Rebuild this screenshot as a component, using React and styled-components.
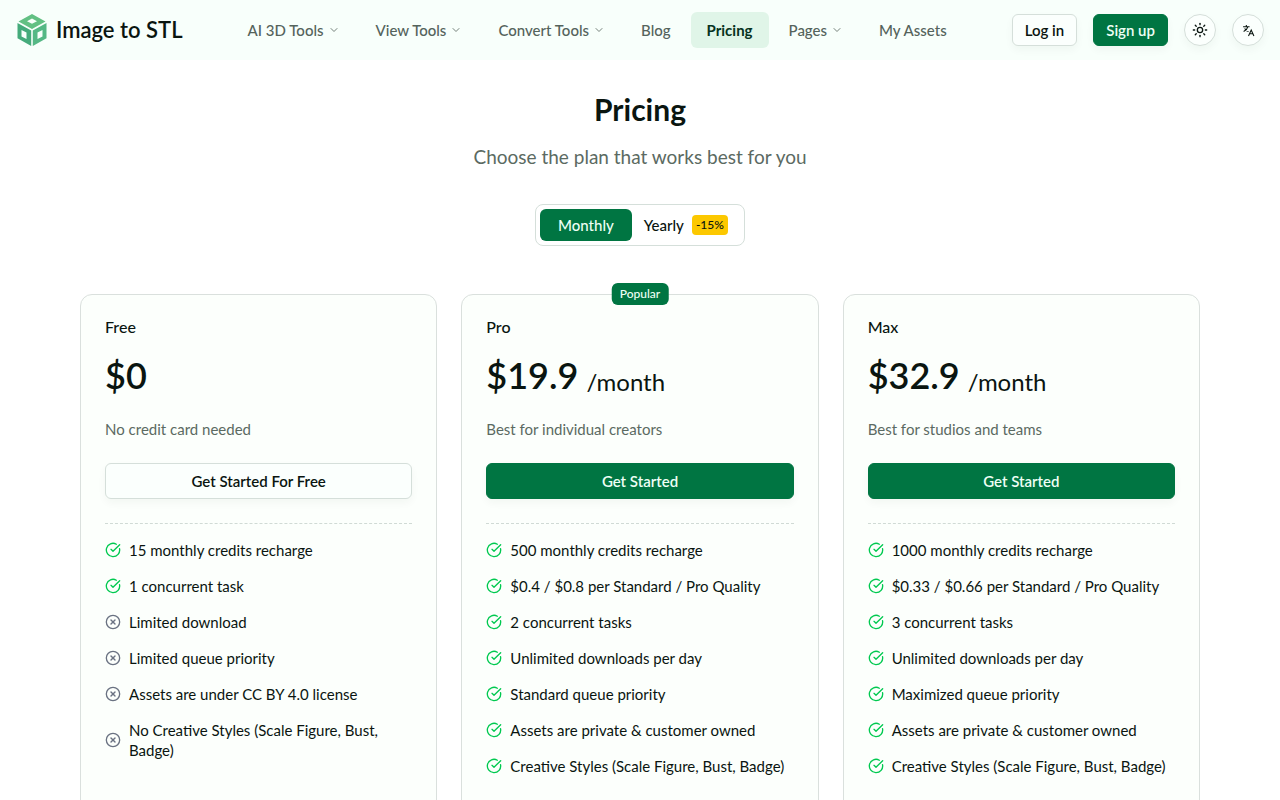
import React, { useState } from 'react'
import styled, { createGlobalStyle, css } from 'styled-components'
import { ChevronDown, CircleCheckBig, CircleX, Sun } from 'lucide-react'

const navLinks = [
  { label: 'AI 3D Tools', menu: true },
  { label: 'View Tools', menu: true },
  { label: 'Convert Tools', menu: true },
  { label: 'Blog' },
  { label: 'Pricing', active: true },
  { label: 'Pages', menu: true },
  { label: 'My Assets' },
]

const plans = [
  {
    name: 'Free',
    monthly: '$0',
    yearly: '$0',
    description: 'No credit card needed',
    action: 'Get Started For Free',
    features: ['15 monthly credits recharge', '1 concurrent task'],
    limits: [
      'Limited download',
      'Limited queue priority',
      'Assets are under CC BY 4.0 license',
      'No Creative Styles (Scale Figure, Bust, Badge)',
    ],
  },
  {
    name: 'Pro',
    monthly: '$19.9',
    yearly: '$16.9',
    period: '/month',
    description: 'Best for individual creators',
    action: 'Get Started',
    popular: true,
    features: [
      '500 monthly credits recharge',
      '$0.4 / $0.8 per Standard / Pro Quality',
      '2 concurrent tasks',
      'Unlimited downloads per day',
      'Standard queue priority',
      'Assets are private & customer owned',
      'Creative Styles (Scale Figure, Bust, Badge)',
    ],
    limits: [],
  },
  {
    name: 'Max',
    monthly: '$32.9',
    yearly: '$27.9',
    period: '/month',
    description: 'Best for studios and teams',
    action: 'Get Started',
    features: [
      '1000 monthly credits recharge',
      '$0.33 / $0.66 per Standard / Pro Quality',
      '3 concurrent tasks',
      'Unlimited downloads per day',
      'Maximized queue priority',
      'Assets are private & customer owned',
      'Creative Styles (Scale Figure, Bust, Badge)',
    ],
    limits: [],
  },
]

function Logo() {
  return (
    <svg width="32" height="34" viewBox="0 0 32 34" aria-hidden="true">
      <path fill="#62c083" fillRule="evenodd" d="M16 1 29.500 8.500 16 16 2.500 8.500ZM16 5.500 11 8.200 16 10.800 21 8.200Z" />
      <path fill="#45ab7b" fillRule="evenodd" d="M1.500 10 15.200 17.600V33L1.500 25.300ZM5.500 17V23.500L10.500 26V19.500Z" />
      <path fill="#55b885" fillRule="evenodd" d="M30.500 10 16.800 17.600V33L30.500 25.300ZM26.500 17V23.500L21.500 26V19.500Z" />
    </svg>
  )
}

function TranslateIcon() {
  return (
    <svg width="13" height="13" viewBox="0 0 24 24" fill="none" stroke="currentColor" strokeWidth="2" aria-hidden="true">
      <path d="M2 5h12M8 2v3M11 5c-1 4-4 7-8 9M5 8c1 3 4 5 7 6" />
      <path d="m12 22 5-11 5 11M14 18h6" />
    </svg>
  )
}

function PlanCard({ plan, billing }) {
  return (
    <Card>
      {plan.popular && <Popular>Popular</Popular>}
      <PlanName>{plan.name}</PlanName>
      <Price>
        <Amount>{plan[billing]}</Amount>
        {plan.period && <Period>{plan.period}</Period>}
      </Price>
      <Description>{plan.description}</Description>
      <PlanButton $outline={plan.name === 'Free'}>{plan.action}</PlanButton>
      <Features>
        {plan.features.map((feature) => (
          <Feature key={feature}>
            <CircleCheckBig size={16} />
            <span>{feature}</span>
          </Feature>
        ))}
        {plan.limits.map((limit) => (
          <Feature key={limit} $limit>
            <CircleX size={16} />
            <span>{limit}</span>
          </Feature>
        ))}
      </Features>
    </Card>
  )
}

function App() {
  const [billing, setBilling] = useState('monthly')

  return (
    <>
      <GlobalStyle />
      <Header>
        <Brand href="#">
          <Logo />
          Image to STL
        </Brand>
        <Nav>
          {navLinks.map((link) =>
            link.menu ? (
              <NavButton key={link.label}>
                {link.label}
                <ChevronDown size={12} />
              </NavButton>
            ) : (
              <NavLink key={link.label} href="#" $active={link.active}>
                {link.label}
              </NavLink>
            )
          )}
        </Nav>
        <Actions>
          <Button $outline>Log in</Button>
          <Button>Sign up</Button>
          <RoundButton aria-label="Toggle theme">
            <Sun size={16} />
          </RoundButton>
          <RoundButton aria-label="Change language">
            <TranslateIcon />
          </RoundButton>
        </Actions>
      </Header>
      <Main>
        <Title>Pricing</Title>
        <Subtitle>Choose the plan that works best for you</Subtitle>
        <Toggle>
          <ToggleItem $wide $on={billing === 'monthly'} onClick={() => setBilling('monthly')}>
            Monthly
          </ToggleItem>
          <ToggleItem $on={billing === 'yearly'} onClick={() => setBilling('yearly')}>
            Yearly
            <Discount>-15%</Discount>
          </ToggleItem>
        </Toggle>
        <Plans>
          {plans.map((plan) => (
            <PlanCard key={plan.name} plan={plan} billing={billing} />
          ))}
        </Plans>
      </Main>
    </>
  )
}

const GlobalStyle = createGlobalStyle`
  *{
    box-sizing: border-box;
    margin: 0;
    padding: 0;
  }
  body{
    background: #ffffff;
    color: #0a1510;
    font-family: Lato, "Open Sans", sans-serif;
    font-size: 15px;
    line-height: 20px;
  }
  button{
    font: inherit;
    color: inherit;
    background: none;
    border: none;
    cursor: pointer;
  }
  a{
    color: inherit;
    text-decoration: none;
  }
  svg{
    flex-shrink: 0;
  }
`

const Header = styled.header`
  display: flex;
  align-items: center;
  height: 60px;
  padding: 0 16px;
  background: #f8fffb;
`

const Brand = styled.a`
  display: flex;
  align-items: center;
  gap: 8px;
  font-size: 22px;
  font-weight: 600;
  white-space: nowrap;
`

const Nav = styled.nav`
  flex: 1;
  display: flex;
  justify-content: center;
  gap: 4px;
`

const navItem = css`
  display: flex;
  align-items: center;
  gap: 4px;
  height: 36px;
  padding: 0 16px;
  border-radius: 6px;
  color: #55635c;
  font-weight: 500;
  white-space: nowrap;

  svg{
    opacity: 0.8;
  }
`

const NavButton = styled.button`
  ${navItem}
`

const NavLink = styled.a`
  ${navItem}
  ${({ $active }) => $active && css`
    background: #e0f5e8;
    color: #07331f;
    font-weight: 700;
  `}
`

const Actions = styled.div`
  display: flex;
  align-items: center;
  gap: 16px;
`

const Button = styled.button`
  display: flex;
  align-items: center;
  justify-content: center;
  height: 32px;
  padding: 0 12px;
  border-radius: 6px;
  border: 1px solid ${({ $outline }) => ($outline ? '#d5dfda' : '#007542')};
  background: ${({ $outline }) => ($outline ? '#fbfffd' : '#007542')};
  color: ${({ $outline }) => ($outline ? '#0a1510' : '#eefff5')};
  font-weight: 600;
  white-space: nowrap;
  box-shadow: 0 4px 8px rgba(10, 40, 25, 0.04);
`

const RoundButton = styled(Button).attrs({ $outline: true })`
  width: 32px;
  padding: 0;
  border-radius: 50%;
`

const Main = styled.main`
  display: flex;
  flex-direction: column;
  align-items: center;
  max-width: 1152px;
  margin: 0 auto;
  padding: 32px 16px 64px;
`

const Title = styled.h1`
  font-size: 30px;
  line-height: 34px;
  font-weight: 700;
`

const Subtitle = styled.p`
  margin-top: 18px;
  color: #5b6a62;
  font-size: 19px;
  line-height: 26px;
`

const Toggle = styled.div`
  display: flex;
  margin-top: 34px;
  padding: 4px;
  border: 1px solid #d5dfda;
  border-radius: 8px;
`

const ToggleItem = styled.button`
  display: flex;
  align-items: center;
  gap: 8px;
  height: 32px;
  padding: ${({ $wide }) => ($wide ? '0 18px' : '0 12px')};
  border-radius: 6px;
  background: ${({ $on }) => ($on ? '#007542' : 'transparent')};
  color: ${({ $on }) => ($on ? '#eefff5' : '#0a1510')};
  font-weight: 500;
`

const Discount = styled.span`
  padding: 0 4px;
  border-radius: 4px;
  background: #fcc800;
  color: #0a1510;
  font-size: 12px;
`

const Plans = styled.div`
  display: grid;
  grid-template-columns: repeat(3, 1fr);
  gap: 24px;
  width: 100%;
  margin-top: 48px;
`

const Card = styled.section`
  position: relative;
  display: flex;
  flex-direction: column;
  padding: 24px 24px 48px;
  border: 1px solid #dae0dd;
  border-radius: 12px;
  background: #fcfffc;
`

const Popular = styled.span`
  position: absolute;
  top: -12px;
  left: 50%;
  transform: translateX(-50%);
  padding: 0 8px;
  border-radius: 6px;
  background: #007542;
  color: #eefff5;
  font-size: 12px;
  font-weight: 500;
  line-height: 22px;
`

const PlanName = styled.h2`
  font-size: 16px;
  line-height: 16px;
  font-weight: 500;
`

const Price = styled.div`
  display: flex;
  align-items: flex-end;
  gap: 8px;
  height: 44px;
  margin-top: 18px;
`

const Amount = styled.span`
  font-size: 36px;
  font-weight: 600;
  line-height: 44px;
`

const Period = styled.span`
  font-size: 24px;
  line-height: 30px;
`

const Description = styled.p`
  margin-top: 22px;
  color: #5b6a62;
`

const PlanButton = styled(Button)`
  height: 36px;
  margin-top: 24px;
`

const Features = styled.ul`
  display: flex;
  flex-direction: column;
  gap: 16px;
  margin-top: 24px;
  padding-top: 16px;
  border-top: 1px dashed #d0dad5;
  list-style: none;
`

const Feature = styled.li`
  display: flex;
  align-items: center;
  gap: 8px;

  svg{
    color: ${({ $limit }) => ($limit ? '#6a7282' : '#00c950')};
  }
`

export default App
